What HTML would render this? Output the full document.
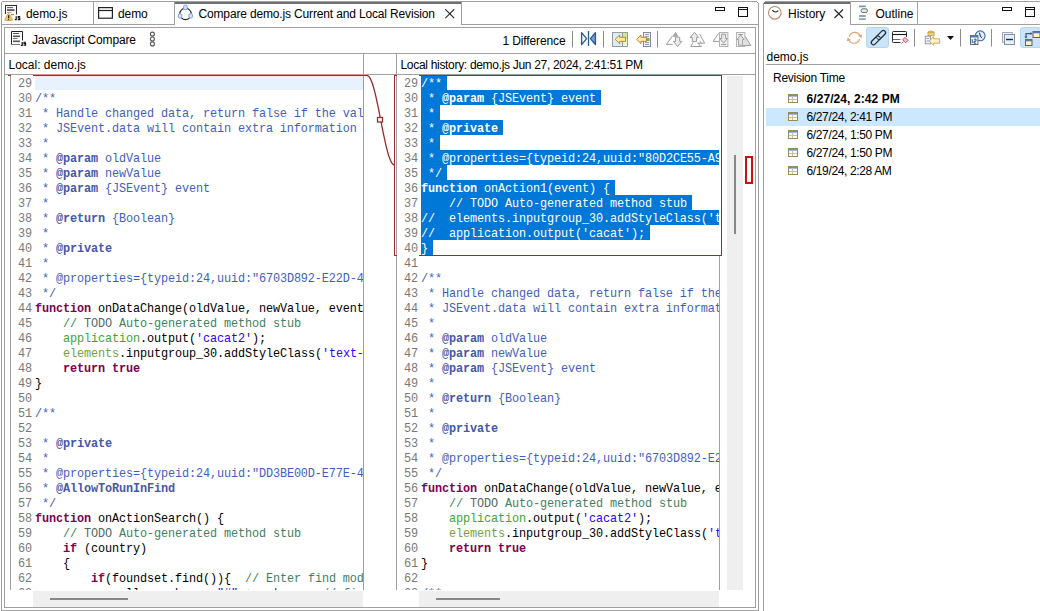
<!DOCTYPE html><html><head><meta charset="utf-8"><style>
*{margin:0;padding:0;box-sizing:border-box}
html,body{width:1040px;height:611px;overflow:hidden;background:#fff}
body{position:relative;font-family:"Liberation Sans",sans-serif;font-size:12px;color:#000}
div,svg{position:absolute}
.ui{white-space:nowrap;font-family:"Liberation Sans",sans-serif;font-size:12px;line-height:14px;color:#000}
.ln{width:22px;text-align:right;font-family:"Liberation Mono",monospace;font-size:11.85px;letter-spacing:-0.111px;line-height:15px;color:#787878;white-space:pre}
.cl{font-family:"Liberation Mono",monospace;font-size:11.85px;letter-spacing:-0.111px;line-height:15px;white-space:pre;color:#000}
.selbg{height:15px;background:#0078d7}
.t{color:#000}
.k{color:#7f0055;font-weight:bold}
.d{color:#3f5fbf}
.g{color:#4458a8;font-weight:bold}
.c{color:#3f7f5f}
.o{color:#4f6a6a}
.s{color:#2a00ff}
.a{color:#3aa63a}
.e{color:#76a23c}
.w{color:#fff}
.hl{background:#0078d7}
</style></head><body>
<div style="left:1px;top:2px;width:1px;height:609px;background:#a0a0a0"></div>
<div style="left:758px;top:3px;width:1px;height:608px;background:#a0a0a0"></div>
<div style="left:757px;top:2px;width:1px;height:1px;background:#a0a0a0"></div>
<div style="left:1px;top:610px;width:758px;height:1px;background:#a0a0a0"></div>
<div style="left:2px;top:1px;width:755px;height:1px;background:#a0a0a0"></div>
<div style="left:1px;top:24px;width:174px;height:1px;background:#a0a0a0"></div>
<div style="left:461px;top:24px;width:297px;height:1px;background:#a0a0a0"></div>
<div style="left:93px;top:2px;width:1px;height:22px;background:#a0a0a0"></div>
<div style="left:174px;top:2px;width:1px;height:23px;background:#a0a0a0"></div>
<div style="left:461px;top:2px;width:1px;height:23px;background:#a0a0a0"></div>
<div style="left:175px;top:2px;width:286px;height:2px;background:#707070"></div>
<div style="left:4px;top:27px;width:1px;height:581px;background:#a0a0a0"></div>
<div style="left:755px;top:27px;width:1px;height:581px;background:#a0a0a0"></div>
<div style="left:4px;top:27px;width:752px;height:1px;background:#a0a0a0"></div>
<div style="left:4px;top:607px;width:752px;height:1px;background:#a0a0a0"></div>
<div style="left:5px;top:53px;width:750px;height:1px;background:#a0a0a0"></div>
<div style="left:5px;top:74px;width:750px;height:1px;background:#a0a0a0"></div>
<div style="left:10px;top:75px;width:1px;height:515px;background:#a0a0a0"></div>
<div style="left:363px;top:53px;width:1px;height:537px;background:#a0a0a0"></div>
<div style="left:396px;top:53px;width:1px;height:537px;background:#a0a0a0"></div>
<div style="left:719px;top:255px;width:1px;height:335px;background:#a0a0a0"></div>
<div class="ui" style="left:26px;top:7px;letter-spacing:-0.1px">demo.js</div>
<div class="ui" style="left:118px;top:7px;letter-spacing:-0.1px">demo</div>
<div class="ui" style="left:198.5px;top:7px;letter-spacing:-0.154px">Compare demo.js Current and Local Revision</div>
<svg style="left:445px;top:9px" width="10" height="10" viewBox="0 0 10 10"><path d="M0.3 0.3L9.2 9.2M9.2 0.3L0.3 9.2" stroke="#222" stroke-width="1.1"/></svg>
<div style="left:715px;top:7px;width:10px;height:4px;border:1px solid #111"></div>
<div style="left:738px;top:7px;width:10px;height:10px;border:1px solid #111"></div>
<div style="left:739px;top:9px;width:8px;height:1px;background:#111"></div>
<div class="ui" style="left:32px;top:33px;letter-spacing:-0.16px">Javascript Compare</div>
<div class="ui" style="left:502.5px;top:34px;letter-spacing:-0.12px">1 Difference</div>
<div class="ui" style="left:8.5px;top:58px;">Local: demo.js</div>
<div class="ui" style="left:400.5px;top:58px;letter-spacing:-0.31px">Local history: demo.js Jun 27, 2024, 2:41:51 PM</div>
<div style="left:11px;top:75px;width:352px;height:515px;overflow:hidden">
<div style="left:24px;top:1px;width:328px;height:14px;background:#e8f2fe"></div>
<div class="ln" style="top:2px;left:-1px">29</div>
<div class="cl" style="top:2px;left:24px"></div>
<div class="ln" style="top:17px;left:-1px">30</div>
<div class="cl" style="top:17px;left:24px"><span class="d">/**</span></div>
<div class="ln" style="top:32px;left:-1px">31</div>
<div class="cl" style="top:32px;left:24px"><span class="d"> * Handle changed data, return false if the value should not be accepted.</span></div>
<div class="ln" style="top:47px;left:-1px">32</div>
<div class="cl" style="top:47px;left:24px"><span class="d"> * JSEvent.data will contain extra information about dataproviderid, its scope and the scope id (record datasource or form/global variable scope)</span></div>
<div class="ln" style="top:62px;left:-1px">33</div>
<div class="cl" style="top:62px;left:24px"><span class="d"> *</span></div>
<div class="ln" style="top:77px;left:-1px">34</div>
<div class="cl" style="top:77px;left:24px"><span class="d"> * </span><span class="g">@param</span><span class="d"> oldValue</span></div>
<div class="ln" style="top:92px;left:-1px">35</div>
<div class="cl" style="top:92px;left:24px"><span class="d"> * </span><span class="g">@param</span><span class="d"> newValue</span></div>
<div class="ln" style="top:107px;left:-1px">36</div>
<div class="cl" style="top:107px;left:24px"><span class="d"> * </span><span class="g">@param</span><span class="d"> {JSEvent} event</span></div>
<div class="ln" style="top:122px;left:-1px">37</div>
<div class="cl" style="top:122px;left:24px"><span class="d"> *</span></div>
<div class="ln" style="top:137px;left:-1px">38</div>
<div class="cl" style="top:137px;left:24px"><span class="d"> * </span><span class="g">@return</span><span class="d"> {Boolean}</span></div>
<div class="ln" style="top:152px;left:-1px">39</div>
<div class="cl" style="top:152px;left:24px"><span class="d"> *</span></div>
<div class="ln" style="top:167px;left:-1px">40</div>
<div class="cl" style="top:167px;left:24px"><span class="d"> * </span><span class="g">@private</span></div>
<div class="ln" style="top:182px;left:-1px">41</div>
<div class="cl" style="top:182px;left:24px"><span class="d"> *</span></div>
<div class="ln" style="top:197px;left:-1px">42</div>
<div class="cl" style="top:197px;left:24px"><span class="d"> * </span><span class="d">@properties={typeid:24,uuid:&quot;6703D892-E22D-4B7C-A5A4-0D2D0D5B1F1E&quot;}</span></div>
<div class="ln" style="top:212px;left:-1px">43</div>
<div class="cl" style="top:212px;left:24px"><span class="d"> */</span></div>
<div class="ln" style="top:227px;left:-1px">44</div>
<div class="cl" style="top:227px;left:24px"><span class="k">function</span><span class="t"> onDataChange(oldValue, newValue, event) {</span></div>
<div class="ln" style="top:242px;left:-1px">45</div>
<div class="cl" style="top:242px;left:24px"><span class="t">    </span><span class="c">// </span><span class="o">TODO</span><span class="c"> Auto-generated method stub</span></div>
<div class="ln" style="top:257px;left:-1px">46</div>
<div class="cl" style="top:257px;left:24px"><span class="t">    </span><span class="a">application</span><span class="t">.output(</span><span class="s">&#x27;cacat2&#x27;</span><span class="t">);</span></div>
<div class="ln" style="top:272px;left:-1px">47</div>
<div class="cl" style="top:272px;left:24px"><span class="t">    </span><span class="e">elements</span><span class="t">.inputgroup_30.addStyleClass(</span><span class="s">&#x27;text-danger&#x27;</span><span class="t">);</span></div>
<div class="ln" style="top:287px;left:-1px">48</div>
<div class="cl" style="top:287px;left:24px"><span class="t">    </span><span class="k">return true</span></div>
<div class="ln" style="top:302px;left:-1px">49</div>
<div class="cl" style="top:302px;left:24px"><span class="t">}</span></div>
<div class="ln" style="top:317px;left:-1px">50</div>
<div class="cl" style="top:317px;left:24px"></div>
<div class="ln" style="top:332px;left:-1px">51</div>
<div class="cl" style="top:332px;left:24px"><span class="d">/**</span></div>
<div class="ln" style="top:347px;left:-1px">52</div>
<div class="cl" style="top:347px;left:24px"></div>
<div class="ln" style="top:362px;left:-1px">53</div>
<div class="cl" style="top:362px;left:24px"><span class="d"> * </span><span class="g">@private</span></div>
<div class="ln" style="top:377px;left:-1px">54</div>
<div class="cl" style="top:377px;left:24px"><span class="d"> *</span></div>
<div class="ln" style="top:392px;left:-1px">55</div>
<div class="cl" style="top:392px;left:24px"><span class="d"> * </span><span class="d">@properties={typeid:24,uuid:&quot;DD3BE00D-E77E-4A1B-9F0A-3C2B1D0E4F5A&quot;}</span></div>
<div class="ln" style="top:407px;left:-1px">56</div>
<div class="cl" style="top:407px;left:24px"><span class="d"> * </span><span class="g">@AllowToRunInFind</span></div>
<div class="ln" style="top:422px;left:-1px">57</div>
<div class="cl" style="top:422px;left:24px"><span class="d"> */</span></div>
<div class="ln" style="top:437px;left:-1px">58</div>
<div class="cl" style="top:437px;left:24px"><span class="k">function</span><span class="t"> onActionSearch() {</span></div>
<div class="ln" style="top:452px;left:-1px">59</div>
<div class="cl" style="top:452px;left:24px"><span class="t">    </span><span class="c">// </span><span class="o">TODO</span><span class="c"> Auto-generated method stub</span></div>
<div class="ln" style="top:467px;left:-1px">60</div>
<div class="cl" style="top:467px;left:24px"><span class="t">    </span><span class="k">if</span><span class="t"> (country)</span></div>
<div class="ln" style="top:482px;left:-1px">61</div>
<div class="cl" style="top:482px;left:24px"><span class="t">    {</span></div>
<div class="ln" style="top:497px;left:-1px">62</div>
<div class="cl" style="top:497px;left:24px"><span class="t">        </span><span class="k">if</span><span class="t">(foundset.find()){  </span><span class="c">// Enter find mode</span></div>
<div class="ln" style="top:512px;left:-1px">63</div>
<div class="cl" style="top:512px;left:24px"><span class="t">            allsearch  =  </span><span class="s">&quot;#&quot;</span><span class="t"> + cnty;    </span><span class="c">// find mode</span></div>
</div>
<div style="left:397px;top:75px;width:322px;height:515px;overflow:hidden">
<div class="ln" style="top:2px;left:-1px">29</div>
<div class="selbg" style="top:0px;left:24px;width:26px"></div>
<div class="cl" style="top:2px;left:24px"><span class="w">/**</span></div>
<div class="ln" style="top:17px;left:-1px">30</div>
<div class="selbg" style="top:15px;left:24px;width:180px"></div>
<div class="cl" style="top:17px;left:24px"><span class="w"> * </span><b class="w">@param</b><span class="w"> {JSEvent} event</span></div>
<div class="ln" style="top:32px;left:-1px">31</div>
<div class="selbg" style="top:30px;left:24px;width:19px"></div>
<div class="cl" style="top:32px;left:24px"><span class="w"> *</span></div>
<div class="ln" style="top:47px;left:-1px">32</div>
<div class="selbg" style="top:45px;left:24px;width:82px"></div>
<div class="cl" style="top:47px;left:24px"><span class="w"> * </span><b class="w">@private</b></div>
<div class="ln" style="top:62px;left:-1px">33</div>
<div class="selbg" style="top:60px;left:24px;width:19px"></div>
<div class="cl" style="top:62px;left:24px"><span class="w"> *</span></div>
<div class="ln" style="top:77px;left:-1px">34</div>
<div class="selbg" style="top:75px;left:24px;width:495px"></div>
<div class="cl" style="top:77px;left:24px"><span class="w"> * </span><span class="w">@properties={typeid:24,uuid:&quot;80D2CE55-A9F1-4C2B-8E7D-1A2B3C4D5E6F&quot;}</span></div>
<div class="ln" style="top:92px;left:-1px">35</div>
<div class="selbg" style="top:90px;left:24px;width:26px"></div>
<div class="cl" style="top:92px;left:24px"><span class="w"> */</span></div>
<div class="ln" style="top:107px;left:-1px">36</div>
<div class="selbg" style="top:105px;left:24px;width:194px"></div>
<div class="cl" style="top:107px;left:24px"><b class="w">function</b><span class="w"> onAction1(event) {</span></div>
<div class="ln" style="top:122px;left:-1px">37</div>
<div class="selbg" style="top:120px;left:24px;width:271px"></div>
<div class="cl" style="top:122px;left:24px"><span class="w">    </span><span class="w">// </span><span class="w">TODO</span><span class="w"> Auto-generated method stub</span></div>
<div class="ln" style="top:137px;left:-1px">38</div>
<div class="selbg" style="top:135px;left:24px;width:397px"></div>
<div class="cl" style="top:137px;left:24px"><span class="w">//  elements.inputgroup_30.addStyleClass(&#x27;text-danger&#x27;);</span></div>
<div class="ln" style="top:152px;left:-1px">39</div>
<div class="selbg" style="top:150px;left:24px;width:229px"></div>
<div class="cl" style="top:152px;left:24px"><span class="w">//  application.output(&#x27;cacat&#x27;);</span></div>
<div class="ln" style="top:167px;left:-1px">40</div>
<div class="selbg" style="top:165px;left:24px;width:12px"></div>
<div class="cl" style="top:167px;left:24px"><span class="w">}</span></div>
<div class="ln" style="top:182px;left:-1px">41</div>
<div class="cl" style="top:182px;left:24px"></div>
<div class="ln" style="top:197px;left:-1px">42</div>
<div class="cl" style="top:197px;left:24px"><span class="d">/**</span></div>
<div class="ln" style="top:212px;left:-1px">43</div>
<div class="cl" style="top:212px;left:24px"><span class="d"> * Handle changed data, return false if the value should not be accepted.</span></div>
<div class="ln" style="top:227px;left:-1px">44</div>
<div class="cl" style="top:227px;left:24px"><span class="d"> * JSEvent.data will contain extra information about dataproviderid</span></div>
<div class="ln" style="top:242px;left:-1px">45</div>
<div class="cl" style="top:242px;left:24px"><span class="d"> *</span></div>
<div class="ln" style="top:257px;left:-1px">46</div>
<div class="cl" style="top:257px;left:24px"><span class="d"> * </span><span class="g">@param</span><span class="d"> oldValue</span></div>
<div class="ln" style="top:272px;left:-1px">47</div>
<div class="cl" style="top:272px;left:24px"><span class="d"> * </span><span class="g">@param</span><span class="d"> newValue</span></div>
<div class="ln" style="top:287px;left:-1px">48</div>
<div class="cl" style="top:287px;left:24px"><span class="d"> * </span><span class="g">@param</span><span class="d"> {JSEvent} event</span></div>
<div class="ln" style="top:302px;left:-1px">49</div>
<div class="cl" style="top:302px;left:24px"><span class="d"> *</span></div>
<div class="ln" style="top:317px;left:-1px">50</div>
<div class="cl" style="top:317px;left:24px"><span class="d"> * </span><span class="g">@return</span><span class="d"> {Boolean}</span></div>
<div class="ln" style="top:332px;left:-1px">51</div>
<div class="cl" style="top:332px;left:24px"><span class="d"> *</span></div>
<div class="ln" style="top:347px;left:-1px">52</div>
<div class="cl" style="top:347px;left:24px"><span class="d"> * </span><span class="g">@private</span></div>
<div class="ln" style="top:362px;left:-1px">53</div>
<div class="cl" style="top:362px;left:24px"><span class="d"> *</span></div>
<div class="ln" style="top:377px;left:-1px">54</div>
<div class="cl" style="top:377px;left:24px"><span class="d"> * </span><span class="d">@properties={typeid:24,uuid:&quot;6703D892-E22D-4B7C-A5A4-0D2D0D5B1F1E&quot;}</span></div>
<div class="ln" style="top:392px;left:-1px">55</div>
<div class="cl" style="top:392px;left:24px"><span class="d"> */</span></div>
<div class="ln" style="top:407px;left:-1px">56</div>
<div class="cl" style="top:407px;left:24px"><span class="k">function</span><span class="t"> onDataChange(oldValue, newValue, event) {</span></div>
<div class="ln" style="top:422px;left:-1px">57</div>
<div class="cl" style="top:422px;left:24px"><span class="t">    </span><span class="c">// </span><span class="o">TODO</span><span class="c"> Auto-generated method stub</span></div>
<div class="ln" style="top:437px;left:-1px">58</div>
<div class="cl" style="top:437px;left:24px"><span class="t">    </span><span class="a">application</span><span class="t">.output(</span><span class="s">&#x27;cacat2&#x27;</span><span class="t">);</span></div>
<div class="ln" style="top:452px;left:-1px">59</div>
<div class="cl" style="top:452px;left:24px"><span class="t">    </span><span class="e">elements</span><span class="t">.inputgroup_30.addStyleClass(</span><span class="s">&#x27;text-danger&#x27;</span><span class="t">);</span></div>
<div class="ln" style="top:467px;left:-1px">60</div>
<div class="cl" style="top:467px;left:24px"><span class="t">    </span><span class="k">return true</span></div>
<div class="ln" style="top:482px;left:-1px">61</div>
<div class="cl" style="top:482px;left:24px"><span class="t">}</span></div>
<div class="ln" style="top:497px;left:-1px">62</div>
<div class="cl" style="top:497px;left:24px"></div>
<div class="ln" style="top:512px;left:-1px">63</div>
<div class="cl" style="top:512px;left:24px"><span class="d">/**</span></div>
</div>
<div style="left:8px;top:75px;width:3px;height:1px;background:#962c2c"></div>
<div style="left:33px;top:75px;width:335px;height:1px;background:#962c2c"></div>
<div style="left:33px;top:74px;width:335px;height:1px;background:#e09090"></div>
<div style="left:33px;top:76px;width:330px;height:1px;background:#fbeaee"></div>
<div style="left:394px;top:75px;width:1px;height:181px;background:#962c2c"></div>
<div style="left:721px;top:75px;width:1px;height:181px;background:#962c2c"></div>
<div style="left:394px;top:75px;width:3px;height:1px;background:#962c2c"></div>
<div style="left:419px;top:75px;width:303px;height:1px;background:#962c2c"></div>
<div style="left:394px;top:255px;width:3px;height:1px;background:#962c2c"></div>
<div style="left:419px;top:255px;width:303px;height:1px;background:#962c2c"></div>
<svg style="left:0;top:0" width="1040" height="611"><path d="M367.00 75.50 L367.92 75.75 L368.83 76.48 L369.75 77.69 L370.67 79.37 L371.58 81.50 L372.50 84.05 L373.42 86.99 L374.33 90.31 L375.25 93.95 L376.17 97.88 L377.08 102.05 L378.00 106.42 L378.92 110.95 L379.83 115.57 L380.75 120.25 L381.67 124.93 L382.58 129.55 L383.50 134.08 L384.42 138.45 L385.33 142.62 L386.25 146.55 L387.17 150.19 L388.08 153.51 L389.00 156.45 L389.92 159.00 L390.83 161.13 L391.75 162.81 L392.67 164.02 L393.58 164.75 L394.50 165.00" fill="none" stroke="#962c2c" stroke-width="1.3"/><rect x="377.5" y="117.5" width="5" height="4.5" fill="#fff" stroke="#962c2c" stroke-width="1.3"/></svg>
<div style="left:727px;top:76px;width:16px;height:514px;background:#efefef"></div>
<div style="left:734px;top:155px;width:2px;height:79px;background:#878787"></div>
<div style="left:745px;top:156px;width:8px;height:28px;border:2px solid #cc1010;background:#fff"></div>
<div style="left:33px;top:591px;width:330px;height:16px;background:#efefef"></div>
<div style="left:50px;top:598px;width:78px;height:2px;background:#878787"></div>
<div style="left:419px;top:591px;width:300px;height:16px;background:#efefef"></div>
<div style="left:436px;top:598px;width:64px;height:2px;background:#878787"></div>
<div style="left:763px;top:3px;width:1px;height:608px;background:#a0a0a0"></div>
<div style="left:764px;top:2px;width:1px;height:1px;background:#a0a0a0"></div>
<div style="left:765px;top:1px;width:275px;height:1px;background:#a0a0a0"></div>
<div style="left:764px;top:2px;width:86px;height:2px;background:#6e6e6e"></div>
<div style="left:850px;top:2px;width:1px;height:23px;background:#a0a0a0"></div>
<div style="left:917px;top:2px;width:1px;height:23px;background:#a0a0a0"></div>
<div style="left:850px;top:24px;width:190px;height:1px;background:#a0a0a0"></div>
<div class="ui" style="left:788px;top:7px;">History</div>
<div class="ui" style="left:875.5px;top:7px;">Outline</div>
<div style="left:1002px;top:7px;width:10px;height:4px;border:1px solid #111"></div>
<div style="left:1025px;top:7px;width:10px;height:10px;border:1px solid #111"></div>
<div style="left:1026px;top:9px;width:8px;height:1px;background:#111"></div>
<div style="left:866px;top:27px;width:23px;height:21px;background:#cce4f7;border:1px solid #b4d6f2;border-radius:3px"></div>
<div style="left:1020px;top:27px;width:22px;height:21px;background:#cce4f7;border:1px solid #b4d6f2;border-radius:3px"></div>
<div class="ui" style="left:766.5px;top:50px;">demo.js</div>
<div style="left:766px;top:64px;width:274px;height:1px;background:#a0a0a0"></div>
<div class="ui" style="left:773px;top:71px;letter-spacing:-0.27px">Revision Time</div>
<div style="left:766px;top:108px;width:274px;height:18px;background:#cce8ff"></div>
<div class="ui" style="left:806.5px;top:92px;font-weight:bold;letter-spacing:0.08px">6/27/24, 2:42 PM</div>
<svg style="left:788px;top:94px" width="10" height="9" viewBox="0 0 10 9"><rect x="0.5" y="0.5" width="9" height="8" fill="#fdfbf0" stroke="#958a62"/><rect x="1" y="1" width="8" height="1.6" fill="#6f8fc8"/><path d="M1 5.5H9M4.5 3V8" stroke="#c8c0a0"/></svg>
<div class="ui" style="left:806.5px;top:110px;letter-spacing:-0.36px">6/27/24, 2:41 PM</div>
<svg style="left:788px;top:112px" width="10" height="9" viewBox="0 0 10 9"><rect x="0.5" y="0.5" width="9" height="8" fill="#fdfbf0" stroke="#958a62"/><rect x="1" y="1" width="8" height="1.6" fill="#6f8fc8"/><path d="M1 5.5H9M4.5 3V8" stroke="#c8c0a0"/></svg>
<div class="ui" style="left:806.5px;top:128px;letter-spacing:-0.36px">6/27/24, 1:50 PM</div>
<svg style="left:788px;top:130px" width="10" height="9" viewBox="0 0 10 9"><rect x="0.5" y="0.5" width="9" height="8" fill="#fdfbf0" stroke="#958a62"/><rect x="1" y="1" width="8" height="1.6" fill="#6f8fc8"/><path d="M1 5.5H9M4.5 3V8" stroke="#c8c0a0"/></svg>
<div class="ui" style="left:806.5px;top:146px;letter-spacing:-0.36px">6/27/24, 1:50 PM</div>
<svg style="left:788px;top:148px" width="10" height="9" viewBox="0 0 10 9"><rect x="0.5" y="0.5" width="9" height="8" fill="#fdfbf0" stroke="#958a62"/><rect x="1" y="1" width="8" height="1.6" fill="#6f8fc8"/><path d="M1 5.5H9M4.5 3V8" stroke="#c8c0a0"/></svg>
<div class="ui" style="left:806.5px;top:164px;letter-spacing:-0.36px">6/19/24, 2:28 AM</div>
<svg style="left:788px;top:166px" width="10" height="9" viewBox="0 0 10 9"><rect x="0.5" y="0.5" width="9" height="8" fill="#fdfbf0" stroke="#958a62"/><rect x="1" y="1" width="8" height="1.6" fill="#6f8fc8"/><path d="M1 5.5H9M4.5 3V8" stroke="#c8c0a0"/></svg>
<svg style="left:0;top:0" width="1040" height="611" viewBox="0 0 1040 611">
<g id="tab1">
 <path d="M5.5 14V5.5H16.5V14.5" fill="none" stroke="#2e2e2e" stroke-width="1.05"/>
 <rect x="7" y="7" width="6" height="1.2" fill="#6a6a6a"/>
 <rect x="7" y="9.2" width="7.5" height="1.8" fill="#5a5a5a"/>
 <rect x="7" y="12" width="4.5" height="1" fill="#c09a90"/>
 <rect x="11" y="14" width="3" height="1.2" fill="#8a8a8a"/>
 <path d="M8.6 13.6 Q9 13.4 9.4 14 L12.4 19.4 Q12.6 20.4 11.6 20.5 L5.6 20.5 Q4.6 20.4 4.9 19.4 L7.8 14 Q8.2 13.4 8.6 13.6 Z" fill="#f4c766" stroke="#d6a24a" stroke-width="0.9"/>
 <rect x="8.05" y="15.2" width="1.2" height="2.8" fill="#1e1e1e"/>
 <rect x="8.05" y="18.7" width="1.2" height="1.1" fill="#1e1e1e"/>
 <path d="M16.2 16.2V19.6H14.8" stroke="#111" fill="none" stroke-width="1.2"/>
 <path d="M20.2 16.6H18.2V18H19.8V19.6H17.8" stroke="#111" fill="none" stroke-width="1.1"/>
</g>
<g id="tab2">
 <rect x="98.6" y="7.6" width="13.8" height="10.6" fill="none" stroke="#222" stroke-width="1.2"/>
 <path d="M98.6 10.5H112.4" stroke="#222" stroke-width="1.2"/>
</g>
<g id="tab3">
 <circle cx="185.5" cy="13.9" r="5.7" fill="none" stroke="#2a2a2a" stroke-width="1.15"/>
 <rect x="183.6" y="5.2" width="3.6" height="4.4" rx="1.3" fill="#d6e4fa" stroke="#7d9fdc" stroke-width="1"/>
 <rect x="178.3" y="13.8" width="3.6" height="4.2" rx="1.3" fill="#d6e4fa" stroke="#7d9fdc" stroke-width="1"/>
 <rect x="188.9" y="13.8" width="3.6" height="4.2" rx="1.3" fill="#d6e4fa" stroke="#7d9fdc" stroke-width="1"/>
</g>
<g id="jsicon">
 <path d="M11.5 44.5V31.5H22.5V40.5" fill="none" stroke="#222"/>
 <path d="M11.5 44.5H20" stroke="#777"/>
 <rect x="13" y="33" width="6" height="1" fill="#555"/>
 <rect x="13" y="35.5" width="7" height="1.6" fill="#555"/>
 <rect x="13" y="38" width="4.5" height="1" fill="#777"/>
 <rect x="13" y="40.5" width="7" height="1.6" fill="#555"/>
 <path d="M22.2 42V45.3H20.8" stroke="#111" fill="none" stroke-width="1.2"/>
 <path d="M26 42.3H24V43.6H25.6V45.2H23.6" stroke="#111" fill="none" stroke-width="1.1"/>
</g>
<g id="dots" fill="none" stroke="#555" stroke-width="1.1">
 <circle cx="152.4" cy="34.1" r="2"/><circle cx="152.4" cy="39" r="2"/><circle cx="152.4" cy="43.9" r="2"/>
</g>
<g id="sep" stroke="#8c8c8c">
 <path d="M572.5 31V47.5M603.5 31V47.5M657.5 31V47.5"/>
</g>
<g id="mergebtn">
 <path d="M581.6 32.6 L586.6 38.6 L581.6 44.6 Z" fill="#fff" stroke="#2b5b8e" stroke-width="1.4" stroke-linejoin="round"/>
 <path d="M588.5 31 V46" stroke="#2b5b8e" stroke-width="1.3"/>
 <path d="M595.4 32.6 L590.4 38.6 L595.4 44.6 Z" fill="#72a5dc" stroke="#2b5b8e" stroke-width="1.4" stroke-linejoin="round"/>
</g>
<g id="copyall">
 <rect x="612.5" y="32.5" width="15" height="14" fill="#d8eefb" stroke="#9a9a9a"/>
 <rect x="623" y="33" width="4" height="6" fill="#cfe692"/>
 <rect x="623" y="39" width="4" height="7" fill="#eaf5d4"/>
 <path d="M622.5 33V46" stroke="#9a9a9a"/>
 <path d="M615.2 39.3 L619.6 35 V37.3 H625.5 V41.4 H619.6 V43.7 Z" fill="#ffe9a8" stroke="#c0882a" stroke-linejoin="round"/>
</g>
<g id="copyone">
 <rect x="643.5" y="32.5" width="7" height="14" fill="#eef3fb" stroke="#8a8a8a"/>
 <path d="M645 34.5H649M645 36.5H649M645 42.5H649M645 44.5H649" stroke="#8c9cc4"/>
 <rect x="646" y="38" width="3.5" height="3" fill="#76ae48"/>
 <path d="M636.6 39.3 L641 35 V37.3 H646.5 V41.4 H641 V43.7 Z" fill="#ffe9a8" stroke="#c0882a" stroke-linejoin="round"/>
</g>
<g id="grey" stroke="#9c9c9c" fill="none">
 <path d="M675.4 32.6 L677.6 36.2 L673.3 36.2 Z" fill="#aaa"/>
 <path d="M672.6 35.8 L666.4 44.4 H672.8"/>
 <path d="M675.5 37.2 H679.7 V41.4 H681.8 L677.6 46.6 L673.4 41.4 H675.5 Z" fill="#ececec"/>
 <path d="M694.5 32.3 L698.6 37.5 H696.5 V41.6 H692.3 V37.5 H690.2 Z" fill="#ececec"/>
 <path d="M699.7 34.2 L704.6 43.2 H697.2" />
 <path d="M690.8 46.5 H701.8 M693 42.5 L690.8 46.5 M698.2 42.8 L700.2 46.2 M699.8 40.8 L701.6 43.8"/>
 <path d="M718.6 33.2 L713.2 41.4 H719"/>
 <rect x="719.5" y="32.5" width="8.4" height="14" fill="#f3f3f3" stroke="#b4b4b4"/>
 <path d="M721.6 34.2 H725.6 V38.5 H727.4 L723.6 43.2 L719.8 38.5 H721.6 Z" fill="#e6e6e6"/>
 <path d="M721 44.5H726.2"/>
 <rect x="736.5" y="32.5" width="8.4" height="14" fill="#f3f3f3" stroke="#b4b4b4"/>
 <path d="M738.2 34.5H742.8"/>
 <path d="M740.6 35 L744.2 39.6 H742.6 V45.2 H738.6 V39.6 H737 Z" fill="#e6e6e6"/>
 <path d="M745.4 36.6 L750.8 45.5 H742.2" fill="#e0e0e0"/>
</g>
<g id="histtab">
 <circle cx="774.8" cy="12.8" r="6.3" fill="none" stroke="#b8896a" stroke-width="1.1"/>
 <path d="M772.4 10.2 Q775 13.6 778.2 10.6" fill="none" stroke="#222" stroke-width="1.2"/>
 <path d="M834.5 9.5L843 18M843 9.5L834.5 18" stroke="#222" stroke-width="1.1"/>
</g>
<g id="outlinetab">
 <rect x="859" y="5.6" width="6.8" height="1.6" fill="#6a8fd0"/>
 <rect x="861.2" y="8.8" width="6.2" height="3.8" rx="1.6" fill="#e8e8e8" stroke="#6a6a6a" stroke-width="1"/>
 <rect x="859" y="15.2" width="6.8" height="1.6" fill="#6a8fd0"/>
 <rect x="859" y="18.4" width="6.8" height="1.4" fill="#8a8a8a"/>
</g>
<g id="histtools">
 <path d="M849.2 36.8 A5.8 5.8 0 0 1 860 35.6" fill="none" stroke="#e5a676" stroke-width="1.2"/>
 <path d="M859.6 39 A5.8 5.8 0 0 1 848.8 40" fill="none" stroke="#e5a676" stroke-width="1.2"/>
 <path d="M858 35.5 L861.6 38.2 L862 34.4 Z" fill="#e5a676"/>
 <path d="M851 40 L847.4 37.4 L847 41.2 Z" fill="#e5a676"/>
 <rect x="-5.2" y="-2.2" width="10.4" height="4.4" rx="2.2" transform="translate(875.6,40.4) rotate(-45)" fill="none" stroke="#1f2d3a" stroke-width="1.25"/>
 <rect x="-5.2" y="-2.2" width="10.4" height="4.4" rx="2.2" transform="translate(881.2,34.8) rotate(-45)" fill="none" stroke="#1f2d3a" stroke-width="1.25"/>
 <path d="M877.2 37.2 L879.6 38.2" stroke="#cce4f7" stroke-width="1.6"/>
 <rect x="892.5" y="31.5" width="14" height="11" rx="0.8" fill="none" stroke="#2a2a2a" stroke-width="1"/>
 <path d="M892.5 34.5H906.5" stroke="#1a1a1a" stroke-width="1.1"/>
 <path d="M893 39.5H900.8" stroke="#6a6a6a" stroke-width="1"/>
 <rect x="900.5" y="37" width="9" height="7" fill="#fff"/>
 <path d="M901.6 43.6 L903.6 41.6" stroke="#555" stroke-width="0.9"/>
 <path d="M902.6 39.8 L905.6 42.8 L908 40.4 L905 37.4 Z" fill="#f3c2d0" stroke="#cf4868" stroke-width="1"/>
 <path d="M914.5 29V46.5M960.5 29V46.5M991.5 29V46.5" stroke="#8c8c8c"/>
 <ellipse cx="931" cy="32.3" rx="3" ry="1.3" fill="#e8c860" stroke="#c8a040" stroke-width="0.8"/>
 <rect x="928" y="32.3" width="6" height="3.5" fill="#f0d070" stroke="#c8a040" stroke-width="0.8"/>
 <rect x="925.3" y="36.2" width="5.2" height="7.6" fill="#f2f4fa" stroke="#8a8fa8" stroke-width="0.9"/>
 <path d="M926.5 38.5H929M926.5 41H929" stroke="#7a8ab0" stroke-width="0.8"/>
 <path d="M929.3 41 L933.6 36.6 V38.8 H939.6 V43.2 H933.6 V45.4 Z" fill="#fff3c8" stroke="#d0a040" stroke-width="0.9" stroke-linejoin="round"/>
 <path d="M947 36H954L950.5 40Z" fill="#111"/>
 <circle cx="980.2" cy="35.8" r="4.9" fill="#e4eefa" stroke="#3a6aa8" stroke-width="1.1"/>
 <path d="M979.4 32.6 L980.6 36.8 L982 37.6" fill="none" stroke="#1a2a4a" stroke-width="1"/>
 <rect x="970.5" y="35.5" width="7.4" height="9" fill="#fff" stroke="#5a6a80" stroke-width="1"/>
 <rect x="970.5" y="35.5" width="7.4" height="2" fill="#4a7ac0"/>
 <path d="M972.2 39.2V43.2M974 39.2H976V41.2H974V43.2H976.2" fill="none" stroke="#1a3a6a" stroke-width="0.9"/>
 <rect x="1002.5" y="32.5" width="9.8" height="9.8" fill="#eef4fb" stroke="#a0a8b8" stroke-width="1"/>
 <rect x="1004.5" y="34.5" width="10" height="10" fill="#e6f0fa" stroke="#8890a0" stroke-width="1"/>
 <path d="M1006 39.5H1013" stroke="#1a2a4a" stroke-width="1.4"/>
 <rect x="1033" y="31.5" width="7" height="6" fill="#fff4c8" stroke="#6a6040" stroke-width="1"/>
 <rect x="1033" y="31.5" width="7" height="1.8" fill="#5a78b8"/>
 <rect x="1025.5" y="39.5" width="6.5" height="6" fill="#fff4c8" stroke="#6a6040" stroke-width="1"/>
 <rect x="1025.5" y="39.5" width="6.5" height="1.8" fill="#5a78b8"/>
 <path d="M1026 37.6 V33.6 H1031" fill="none" stroke="#3a5a90" stroke-width="1.2"/>
 <path d="M1030.5 32 L1032.5 33.6 L1030.5 35.2Z M1024.4 36.6 L1026 38.6 L1027.6 36.6Z" fill="#3a5a90"/>
</g>
</svg>
</body></html>
